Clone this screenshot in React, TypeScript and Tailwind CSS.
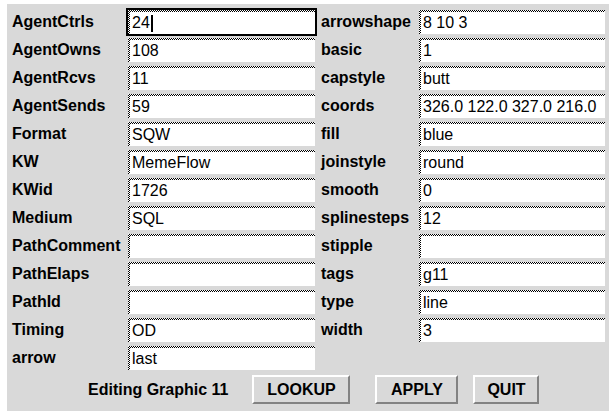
import React from "react";

const left: [string, string][] = [
  ["AgentCtrls", "24"],
  ["AgentOwns", "108"],
  ["AgentRcvs", "11"],
  ["AgentSends", "59"],
  ["Format", "SQW"],
  ["KW", "MemeFlow"],
  ["KWid", "1726"],
  ["Medium", "SQL"],
  ["PathComment", ""],
  ["PathElaps", ""],
  ["PathId", ""],
  ["Timing", "OD"],
  ["arrow", "last"],
];

const right: [string, string][] = [
  ["arrowshape", "8 10 3"],
  ["basic", "1"],
  ["capstyle", "butt"],
  ["coords", "326.0 122.0 327.0 216.0"],
  ["fill", "blue"],
  ["joinstyle", "round"],
  ["smooth", "0"],
  ["splinesteps", "12"],
  ["stipple", ""],
  ["tags", "g11"],
  ["type", "line"],
  ["width", "3"],
];

function Entry({ value, focused }: { value: string; focused?: boolean }) {
  return (
    <div className={focused ? "h-[28px] p-[2px] bg-black" : "h-[28px] p-[2px]"}>
      <div className="h-full pl-[2px] pt-[2px] bg-[repeating-conic-gradient(#000_0%_25%,#fff_0%_50%)] bg-size-[2px_2px]">
        <div className="h-full bg-white flex items-center pl-[2px] text-[16px] text-black font-['Liberation_Sans',Arial,sans-serif] whitespace-nowrap overflow-hidden leading-none">
          {value}
          {focused && <span className="inline-block w-[2px] h-[17px] bg-black ml-[1px]" />}
        </div>
      </div>
    </div>
  );
}

function Label({ text, pad }: { text: string; pad?: boolean }) {
  return (
    <div
      className={
        pad
          ? "h-[28px] flex items-center pl-[4px] text-[16px] font-bold text-black whitespace-nowrap"
          : "h-[28px] flex items-center text-[16px] font-bold text-black whitespace-nowrap"
      }
    >
      {text}
    </div>
  );
}

function Btn({ label, w }: { label: string; w: string }) {
  return (
    <div
      className={`${w} h-[29px] flex items-center justify-center bg-[#d9d9d9] border-2 border-t-white border-l-white border-b-[#828282] border-r-[#828282] text-[16px] font-bold text-black`}
    >
      {label}
    </div>
  );
}

export default function App() {
  const rows = left.map((l, i) => ({ l, r: right[i] }));
  return (
    <div className="w-[616px] h-[418px] bg-white font-['Liberation_Sans',Arial,sans-serif]">
      <div className="ml-[7px] pt-[4px]">
        <div className="w-[602px] bg-[#d9d9d9] pt-[4px] pl-[5px]">
          <div className="grid grid-cols-[114px_191px_100px_190px]">
            {rows.map(({ l, r }, i) => (
              <React.Fragment key={i}>
                <Label text={l[0]} />
                <Entry value={l[1]} focused={i === 0} />
                {r ? <Label text={r[0]} pad /> : <div className="h-[28px]" />}
                {r ? <Entry value={r[1]} /> : <div className="h-[28px]" />}
              </React.Fragment>
            ))}
          </div>
          <div className="h-[39px] flex items-center pl-[76px] pb-[4px]">
            <span className="text-[16px] font-bold text-black whitespace-nowrap">Editing Graphic 11</span>
            <div className="ml-[24px]">
              <Btn label="LOOKUP" w="w-[98px]" />
            </div>
            <div className="ml-[25px]">
              <Btn label="APPLY" w="w-[83px]" />
            </div>
            <div className="ml-[15px]">
              <Btn label="QUIT" w="w-[66px]" />
            </div>
          </div>
        </div>
      </div>
    </div>
  );
}
